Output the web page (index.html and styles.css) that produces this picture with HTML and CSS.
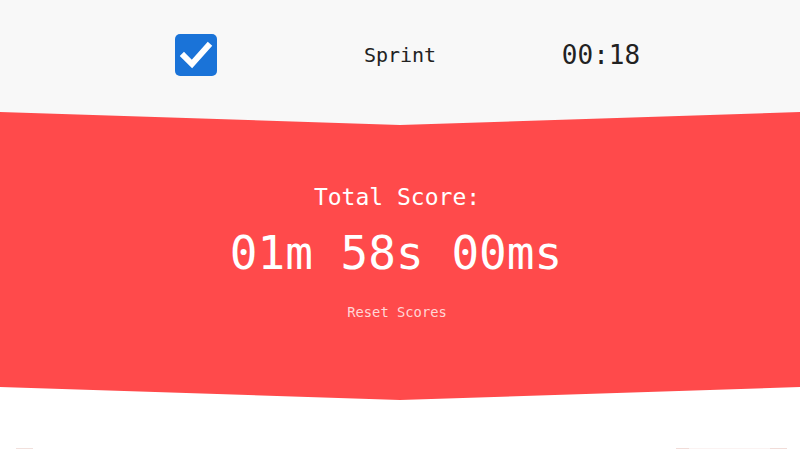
FILE: index.html
```html
<!DOCTYPE html>
<html lang="en">
<head>
<meta charset="utf-8">
<title>Sprint</title>
<link rel="stylesheet" href="styles.css">
</head>
<body>
  <header class="topbar">
    <div class="topbar-cell">
      <span class="check-box" role="checkbox" aria-checked="true">
        <svg viewBox="0 0 42 42" width="42" height="42">
          <rect x="0" y="0" width="42" height="42" rx="5" fill="#1a73d8"/>
          <path d="M9 22 L17 30 L33 12" fill="none" stroke="#fff" stroke-width="6" stroke-linecap="square" stroke-linejoin="miter"/>
        </svg>
      </span>
    </div>
    <div class="topbar-cell mode">Sprint</div>
    <div class="topbar-cell clock">00:18</div>
  </header>

  <section class="score-wrap">
    <div class="score-band">
      <div class="score-label">Total Score:</div>
      <div class="score-value">01m 58s 00ms</div>
      <button class="reset" type="button">Reset Scores</button>
    </div>
  </section>

  <footer class="bottom-lines">
    <span class="line line-left"></span>
    <span class="line line-right"></span>
  </footer>
</body>
</html>
```
FILE: styles.css
```css
* { box-sizing: border-box; }

html, body {
  margin: 0;
  padding: 0;
  background: #ffffff;
  font-family: "DejaVu Sans Mono", "Liberation Mono", monospace;
  width: 800px;
  height: 450px;
  overflow: hidden;
}

.topbar {
  background: #f8f8f8;
  height: 112px;
  display: grid;
  grid-template-columns: repeat(3, 203px);
  justify-content: center;
  align-items: center;
  padding-bottom: 2px;
  margin-left: -4px;
}

.topbar-cell {
  display: flex;
  justify-content: center;
  align-items: center;
  color: #222;
}

.check-box {
  display: block;
  width: 42px;
  height: 42px;
  margin-left: 2px;
}
.check-box svg { display: block; }

.mode {
  font-size: 20px;
  margin-left: 4px;
}

.clock {
  font-size: 26px;
  margin-left: 0;
}

.score-wrap {
  background: linear-gradient(#f8f8f8 0 14px, #ffffff 14px);
}

.score-band {
  height: 288px;
  background: #ff4a4b;
  clip-path: polygon(0 0, 50% 13px, 100% 0, 100% 275px, 50% 288px, 0 275px);
  display: flex;
  flex-direction: column;
  align-items: center;
  padding-top: 71px;
  padding-right: 6px;
  color: #fff;
}

.score-label {
  font-size: 23px;
  line-height: 28px;
}

.score-value {
  font-size: 46px;
  line-height: 56px;
  margin-top: 14px;
  margin-left: -2px;
}

.reset {
  margin-top: 22px;
  background: none;
  border: 0;
  padding: 0;
  font-family: inherit;
  font-size: 13.8px;
  line-height: 18px;
  color: #ffd6d6;
  cursor: pointer;
}

.bottom-lines {
  position: relative;
  height: 50px;
}

.line {
  position: absolute;
  top: 48px;
  height: 1px;
  background: #f1e0dc;
}
.line-left { left: 16px; width: 17px; }
.line-right { left: 676px; width: 111px; background: linear-gradient(90deg, #f1dcd8 0 13px, #fbf3f2 13px 94px, #f1dcd8 94px); }
```
